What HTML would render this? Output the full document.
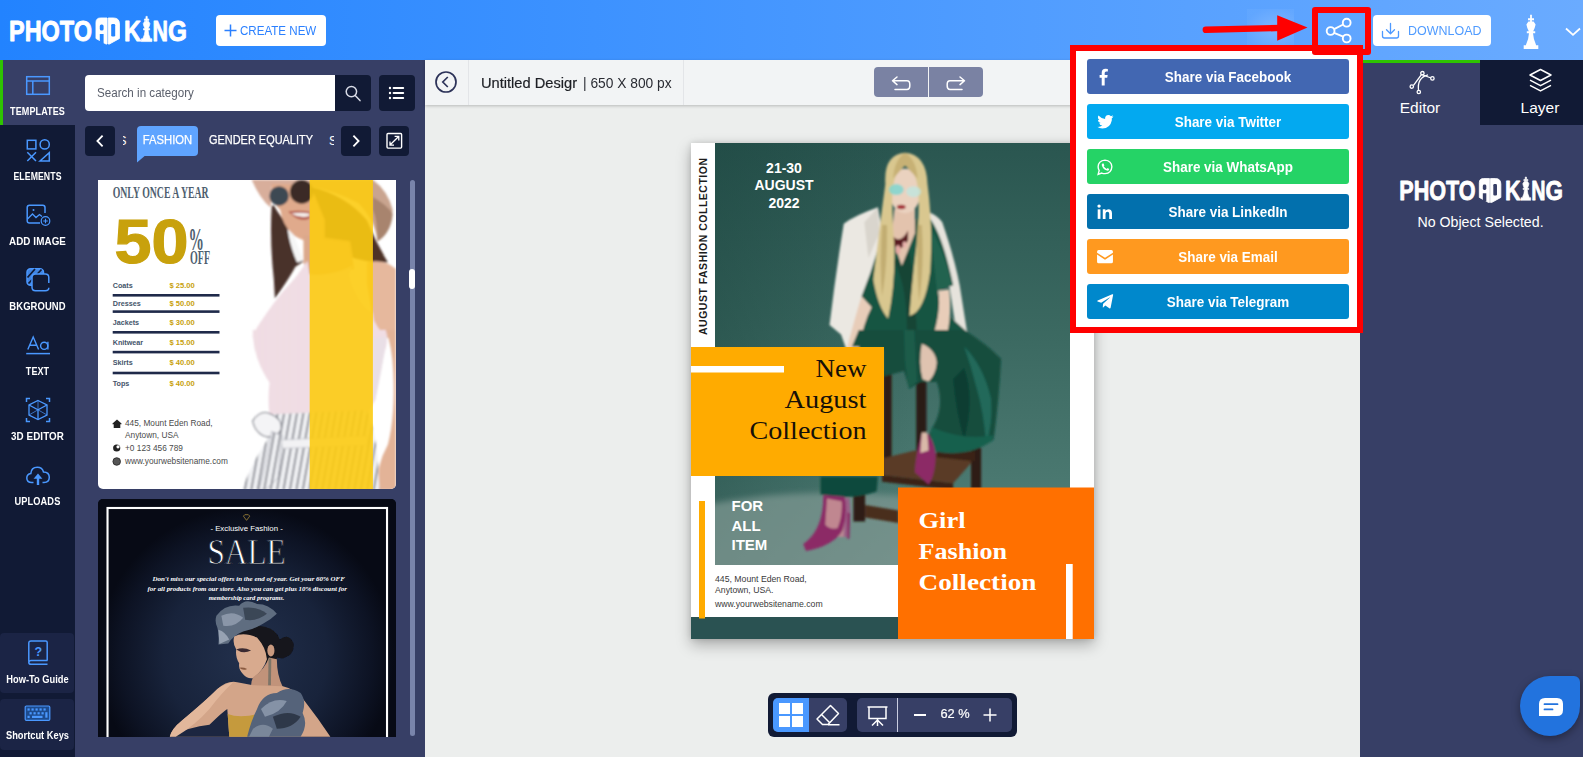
<!DOCTYPE html>
<html>
<head>
<meta charset="utf-8">
<title>PhotoADKing</title>
<style>
*{box-sizing:border-box;margin:0;padding:0}
html,body{width:1583px;height:757px;overflow:hidden;background:#eceeed;font-family:"Liberation Sans",sans-serif;}
.abs{position:absolute}
#header{position:absolute;left:0;top:0;width:1583px;height:60px;background:linear-gradient(90deg,#2283ff 0%,#6aabff 100%);}
#sidebar{position:absolute;left:0;top:60px;width:75px;height:697px;background:#111a35;}
#panel{position:absolute;left:75px;top:60px;width:350px;height:697px;background:#373f66;}
#center{position:absolute;left:425px;top:60px;width:935px;height:697px;background:#eceeed;}
#right{position:absolute;left:1360px;top:60px;width:223px;height:697px;background:#373f66;}
.sb-item{position:absolute;left:0;width:75px;height:65px;text-align:center;color:#fff;font-size:10.5px;font-weight:bold;letter-spacing:0.1px}
.sb-item .lbl{position:absolute;left:0;width:75px;text-align:center;}
.sb-item svg{position:absolute;}
</style>
</head>
<body>
<!-- HEADER -->
<div id="header">
<svg width="0" height="0" style="position:absolute">
<defs>
<symbol id="king" viewBox="-8 14 16 36" overflow="visible"><path d="M-0.9,14.7H0.9V18.2H3V20.2H0.9V21.4H2.6L4.6,24.6Q4,28 2.2,31.3H4.2V33.3H2Q2.5,40 5,44.8V45.2H7.3V49.1H-7.3V45.2H-5V44.8Q-2.5,40 -2,33.3H-4.2V31.3H-2.2Q-4,28 -4.6,24.6L-2.6,21.4H-0.9V20.2H-3V18.2H-0.9Z"/></symbol>
<symbol id="logo" viewBox="0 0 200 60" overflow="visible">
<g fill="#fff" stroke="#fff" stroke-width="0.9" stroke-linejoin="round" font-family="Liberation Sans, sans-serif" font-weight="bold" font-size="30">
<text x="9" y="41.4" textLength="83" lengthAdjust="spacingAndGlyphs">PHOTO</text>
<path d="M96,22.5Q96,18 100.5,18H107V44H106L96,38.5Z M108.2,18H113.5Q119.4,18 119.4,24V38.5L109.4,44H108.2Z"/>
<text x="124" y="41.4" textLength="17" lengthAdjust="spacingAndGlyphs">K</text>
<text x="152.4" y="41.4" textLength="15.5" lengthAdjust="spacingAndGlyphs">N</text>
<text x="168" y="41.4" textLength="19" lengthAdjust="spacingAndGlyphs">G</text>
<path transform="translate(146.6,5.6) scale(0.73,0.733)" d="M-0.9,14.7H0.9V18.2H3V20.2H0.9V21.4H2.6L4.6,24.6Q4,28 2.2,31.3H4.2V33.3H2Q2.5,40 5,44.8V45.2H7.3V49.1H-7.3V45.2H-5V44.8Q-2.5,40 -2,33.3H-4.2V31.3H-2.2Q-4,28 -4.6,24.6L-2.6,21.4H-0.9V20.2H-3V18.2H-0.9Z"/>
</g>
<g class="lg-cut" style="fill:var(--lc,#2585ff)">
<rect x="99.8" y="24.5" width="3.8" height="6" rx="1.6"/>
<rect x="99.8" y="34" width="3.8" height="9"/>
<rect x="111.2" y="24" width="4" height="12.5" rx="1.2"/>
</g>
</symbol>
</defs></svg>
<svg class="abs" style="left:0;top:0" width="200" height="60"><use href="#logo"/></svg>
<div class="abs" style="left:216px;top:15px;width:110px;height:31px;background:#fff;border-radius:4px;"></div>
<svg class="abs" style="left:224px;top:24px" width="13" height="13"><path d="M6.5,0.5V12.5M0.5,6.5H12.5" stroke="#2b80ff" stroke-width="1.5" fill="none"/></svg>
<div class="abs" style="left:240px;top:22.8px;font-size:13px;line-height:16px;color:#2b80ff;white-space:nowrap;transform-origin:left center;transform:scaleX(0.89)">CREATE NEW</div>
<!-- red arrow -->
<div class="abs" style="left:1247px;top:9px;width:47px;height:37px;background:radial-gradient(ellipse at 60% 55%,rgba(255,255,255,0.2),rgba(255,255,255,0.04) 75%)"></div>
<svg class="abs" style="left:1195px;top:5px" width="125" height="50"><path d="M10.8,24.8L86,22.9" stroke="#ff0000" stroke-width="6.4" stroke-linecap="round" fill="none"/><path d="M82.2,10.2L112.5,22.5L82.2,35.7Z" fill="#ff0000"/></svg>
<!-- share icon -->
<svg class="abs" style="left:1320px;top:12px" width="40" height="40"><g stroke="#fff" stroke-width="1.9" fill="none"><circle cx="26.7" cy="10.7" r="3.9"/><circle cx="10.6" cy="19" r="3.9"/><circle cx="26.7" cy="26.5" r="3.9"/><path d="M14.1,17.2L23.2,12.5M14.1,20.8L23.2,24.7"/></g></svg>
<!-- download -->
<div class="abs" style="left:1373px;top:15px;width:118px;height:31px;background:#fff;border-radius:4px;"></div>
<svg class="abs" style="left:1381px;top:21px" width="20" height="20"><g stroke="#4d99ff" stroke-width="1.3" fill="none" stroke-linecap="round" stroke-linejoin="round"><path d="M9.5,2.5V12.5M5.5,8.8L9.5,12.8L13.5,8.8"/><path d="M1.5,10.5V15Q1.5,17 3.5,17H15.5Q17.5,17 17.5,15V10.5"/></g></svg>
<div class="abs" style="left:1408px;top:22.8px;font-size:13px;line-height:16px;color:#4f9bff;white-space:nowrap;transform-origin:left center;transform:scaleX(0.96)">DOWNLOAD</div>
<svg class="abs" style="left:1523px;top:14px" width="16" height="36" fill="#fff"><use href="#king"/></svg>
<svg class="abs" style="left:1563px;top:25px" width="20" height="14"><path d="M3,3.5L10,9.8L17,3.5" stroke="#fff" stroke-width="1.8" fill="none"/></svg>
</div>
<!-- SIDEBAR -->
<div id="sidebar"><div class="sb-item" style="top:0px;background:#373f66;border-left:3px solid #2ec400;"><svg style="left:0;top:0" width="75" height="65" viewBox="3 0 75 65" fill="none" stroke="#4a98ff" stroke-width="1.5"><rect x="26.7" y="16.7" width="22.6" height="17.6"/><path d="M26.7,21H49.3M32.8,21V34.3"/></svg><div class="lbl" style="top:44.6px;left:-3px;line-height:13px;transform:scaleX(0.86)">TEMPLATES</div></div><div class="sb-item" style="top:65px;"><svg style="left:0;top:0" width="75" height="65" viewBox="0 0 75 65" fill="none" stroke="#4a98ff" stroke-width="1.5"><rect x="27.3" y="15.3" width="8.6" height="8.6"/><circle cx="44.7" cy="19.4" r="4.6"/><path d="M27.3,27.3L36,36M36,27.3L27.3,36"/><path d="M40,36H49.3V27.6Z"/></svg><div class="lbl" style="top:44.6px;line-height:13px;transform:scaleX(0.83)">ELEMENTS</div></div><div class="sb-item" style="top:130px;"><svg style="left:0;top:0" width="75" height="65" viewBox="0 0 75 65" fill="none" stroke="#4a98ff" stroke-width="1.5"><path d="M45,23V17.5Q45,15.2 42.7,15.2H29.5Q27.2,15.2 27.2,17.5V30.7Q27.2,33 29.5,33H40"/><path d="M27.5,29L32.5,24L36,27.5L39.5,24.5L42,26.5" stroke-width="1.3"/><circle cx="33.5" cy="20" r="1" fill="#4a98ff" stroke="none"/><circle cx="45.5" cy="31" r="4.3" stroke-width="1.2"/><path d="M45.5,28.7V33.3M43.2,31H47.8" stroke-width="1.1"/></svg><div class="lbl" style="top:44.6px;line-height:13px;transform:scaleX(0.935)">ADD IMAGE</div></div><div class="sb-item" style="top:195px;"><svg style="left:0;top:0" width="75" height="65" viewBox="0 0 75 65" fill="none" stroke="#4a98ff" stroke-width="1.5"><rect x="27" y="13.8" width="16.5" height="16.5" rx="3.5" fill="#4a98ff" fill-opacity="0.85"/><path d="M28.5,28.5L41.5,14.5M27.5,22.5L35,14M34,30.5L43.5,20" stroke="#111a35" stroke-width="1.7"/><rect x="32" y="19" width="16.8" height="16.8" rx="3.5" fill="#111a35" stroke="none"/><path d="M48.8,28V22.5Q48.8,19 45.3,19H35.5Q32,19 32,22.5V32.3Q32,35.8 35.5,35.8H45.3Q48.8,35.8 48.8,32.8" /></svg><div class="lbl" style="top:44.6px;line-height:13px;transform:scaleX(0.90)">BKGROUND</div></div><div class="sb-item" style="top:260px;"><svg style="left:0;top:0" width="75" height="65" viewBox="0 0 75 65" fill="none" stroke="#4a98ff" stroke-width="1.5"><path d="M27.8,29.5L33.2,17L38.6,29.5M29.8,25.3H36.6" stroke-width="1.4"/><circle cx="44.2" cy="25.8" r="3.6" stroke-width="1.4"/><path d="M47.9,21.8V29.6" stroke-width="1.4"/><path d="M26.2,33.6H50"/></svg><div class="lbl" style="top:44.6px;line-height:13px;transform:scaleX(0.86)">TEXT</div></div><div class="sb-item" style="top:325px;"><svg style="left:0;top:0" width="75" height="65" viewBox="0 0 75 65" fill="none" stroke="#4a98ff" stroke-width="1.5"><path d="M38,15.5L47,20V30L38,34.5L29,30V20Z" stroke-width="1.3"/><path d="M29,20L38,24.8L47,20M38,24.8V34.5" stroke-width="1.3"/><path d="M38,15.5V24.8M29,30L38,24.8L47,30" stroke-width="0.7"/><path d="M26.5,17V13.5H30M46,13.5H49.5V17M26.5,33V36.5H30M46,36.5H49.5V33" stroke-width="1.5"/></svg><div class="lbl" style="top:44.6px;line-height:13px;transform:scaleX(0.935)">3D EDITOR</div></div><div class="sb-item" style="top:390px;"><svg style="left:0;top:0" width="75" height="65" viewBox="0 0 75 65" fill="none" stroke="#4a98ff" stroke-width="1.5"><path d="M33.5,32.5H31.8Q26.8,32.5 26.8,28Q26.8,24.2 30.8,23.6Q31.2,17.3 37.3,17.3Q42.3,17.3 43.5,22Q49.3,22.2 49.3,27.3Q49.3,32.5 44,32.5H42.5"/><path d="M38,35V26" stroke-width="2.4"/><path d="M33.6,28.7L38,23.6L42.4,28.7Z" fill="#4a98ff" stroke="none"/></svg><div class="lbl" style="top:44.6px;line-height:13px;transform:scaleX(0.88)">UPLOADS</div></div><div class="abs" style="left:0;top:573px;width:74px;height:60px;background:#1b2445;border-radius:4px"></div>
<svg class="abs" style="left:26px;top:579px" width="24" height="28" viewBox="0 0 24 28" fill="none" stroke="#4a98ff" stroke-width="1.5"><path d="M21.2,21.5V3.5Q21.2,2 19.7,2H5Q2.8,2 2.8,4.2V22.5"/><path d="M21.5,21.6H5.2Q2.8,21.6 2.8,23.4Q2.8,25.2 5.2,25.2H21.5" /><text x="12.2" y="16.5" font-family="Liberation Sans, sans-serif" font-size="12.5" font-weight="bold" fill="#4a98ff" stroke="none" text-anchor="middle">?</text></svg>
<div class="abs" style="left:0;top:613px;width:75px;text-align:center;color:#fff;font-weight:bold;font-size:11px;line-height:13px;transform:scaleX(0.845)">How-To Guide</div>
<div class="abs" style="left:0;top:638.5px;width:74px;height:51px;background:#1b2445;border-radius:4px"></div>
<svg class="abs" style="left:24px;top:645px" width="27" height="17" viewBox="0 0 27 17"><rect x="1.2" y="1" width="24.6" height="14.4" rx="1.2" fill="#1d4b8e" stroke="#4a98ff" stroke-width="1.2"/><g fill="#4a98ff"><rect x="3.5" y="3.4" width="2.2" height="2.2"/><rect x="7.5" y="3.4" width="2.2" height="2.2"/><rect x="11.5" y="3.4" width="2.2" height="2.2"/><rect x="15.5" y="3.4" width="2.2" height="2.2"/><rect x="19.5" y="3.4" width="2.2" height="2.2"/><rect x="5.5" y="7.2" width="2.2" height="2.2"/><rect x="9.5" y="7.2" width="2.2" height="2.2"/><rect x="13.5" y="7.2" width="2.2" height="2.2"/><rect x="17.5" y="7.2" width="2.2" height="2.2"/><rect x="21.3" y="7.2" width="2.2" height="5.5"/><rect x="3.5" y="10.8" width="2.2" height="2.2"/><rect x="8" y="10.8" width="10.5" height="2.2"/></g></svg>
<div class="abs" style="left:0;top:669px;width:75px;text-align:center;color:#fff;font-weight:bold;font-size:11px;line-height:13px;transform:scaleX(0.845)">Shortcut Keys</div>
</div>
<!-- PANEL -->
<div id="panel">
<!-- coordinates inside panel: page x-75, y-60 -->
<div class="abs" style="left:10px;top:15px;width:250px;height:36px;background:#fff;border-radius:4px 0 0 4px;"></div>
<div class="abs" style="left:22px;top:25px;font-size:12.5px;line-height:16px;color:#5a5f6b;white-space:nowrap;transform-origin:left center;transform:scaleX(0.93)">Search in category</div>
<div class="abs" style="left:260px;top:15px;width:36px;height:36px;background:#111a35;border-radius:0 4px 4px 0;"></div>
<svg class="abs" style="left:268px;top:23px" width="20" height="20" fill="none" stroke="#d8dbe6" stroke-width="1.5"><circle cx="8.4" cy="8.6" r="5.2"/><path d="M12.2,12.6L17,17.6" stroke-linecap="round"/></svg>
<div class="abs" style="left:304px;top:15px;width:36px;height:36px;background:#111a35;border-radius:4px;"></div>
<svg class="abs" style="left:313px;top:25px" width="18" height="16" fill="#fff"><circle cx="2" cy="3" r="1.2"/><circle cx="2" cy="8" r="1.2"/><circle cx="2" cy="13" r="1.2"/><rect x="4.6" y="2" width="11.6" height="2" rx="1"/><rect x="4.6" y="7" width="11.6" height="2" rx="1"/><rect x="4.6" y="12" width="11.6" height="2" rx="1"/></svg>
<!-- category row -->
<div class="abs" style="left:10px;top:66px;width:30px;height:30px;background:#111a35;border-radius:4px;"></div>
<svg class="abs" style="left:10px;top:66px" width="30" height="30" fill="none" stroke="#fff" stroke-width="1.8"><path d="M17.6,9.7L12.4,15L17.6,20.3"/></svg>
<div class="abs" style="left:47.5px;top:66px;width:4.5px;height:30px;overflow:hidden"><div class="abs" style="right:0.5px;top:8px;font-size:12px;line-height:14px;color:#fff;">S</div></div>
<div class="abs" style="left:62px;top:66px;width:61px;height:30px;background:#5fa4ff;border-radius:4px;"></div>
<svg class="abs" style="left:62px;top:90px" width="12" height="13"><path d="M0,0V12.5L10,4Z" fill="#5fa4ff"/></svg>
<div class="abs" style="left:62px;top:73px;width:61px;text-align:center;font-size:12.5px;line-height:14px;color:#fff;transform:scaleX(0.9);-webkit-text-stroke:0.25px #fff">FASHION</div>
<div class="abs" style="left:134px;top:73px;font-size:12.5px;line-height:14px;color:#fff;white-space:nowrap;transform-origin:left center;transform:scaleX(0.875);-webkit-text-stroke:0.25px #fff">GENDER EQUALITY</div>
<div class="abs" style="left:254px;top:66px;width:5px;height:30px;overflow:hidden"><div class="abs" style="left:0px;top:8px;font-size:12px;line-height:14px;color:#fff;">S</div></div>
<div class="abs" style="left:266px;top:66px;width:30px;height:30px;background:#111a35;border-radius:4px;"></div>
<svg class="abs" style="left:266px;top:66px" width="30" height="30" fill="none" stroke="#fff" stroke-width="1.8"><path d="M12.4,9.7L17.6,15L12.4,20.3"/></svg>
<div class="abs" style="left:304px;top:66px;width:30px;height:30px;background:#111a35;border-radius:4px;"></div>
<svg class="abs" style="left:304px;top:66px" width="30" height="30" fill="none" stroke="#fff" stroke-width="1.4"><rect x="8" y="7.5" width="14.6" height="14.6" rx="1"/><path d="M11,19L19.6,10.5M15.6,10.3H19.8V14.5M11,15.4V19.2H15" stroke-width="1.3"/></svg>
<!-- scrollbar -->
<div class="abs" style="left:334.5px;top:120px;width:5px;height:556px;background:#7984ab;border-radius:2.5px"></div>
<div class="abs" style="left:333.5px;top:209px;width:6.5px;height:20px;background:#fff;border-radius:3px"></div>
<!-- THUMB1 -->
<div id="thumb1" class="abs" style="left:23px;top:120px;width:298px;height:309px;background:#fff;border-radius:0 0 5px 5px;overflow:hidden"><svg width="298" height="309" viewBox="0 0 298 309" style="position:absolute;left:0;top:0">
<defs><filter id="b1" x="-20%" y="-20%" width="140%" height="140%"><feGaussianBlur stdDeviation="1.2"/></filter>
<pattern id="stripes" width="30" height="10" patternUnits="userSpaceOnUse" patternTransform="rotate(10)"><rect width="30" height="10" fill="#eff0f3"/><rect x="0" width="7" height="10" fill="#6a6c76"/></pattern>
<pattern id="ribs" width="14" height="10" patternUnits="userSpaceOnUse"><rect width="14" height="10" fill="#f3e1e7"/><rect x="0" width="3" height="10" fill="#e6ced7"/></pattern>
</defs>
<g filter="url(#b1)">
<g transform="translate(142,-2) scale(0.2114)">
<!-- hat left brim -->
<path d="M55,8 L330,8 L330,40 L150,40 L145,140 Q95,100 55,8Z" fill="#d8ae9b"/>
<!-- hat right brim -->
<path d="M330,8 L628,8 Q700,60 722,150 Q720,250 650,300 Q640,200 560,120 Q450,60 330,40Z" fill="#c9a48f"/>
<path d="M628,90 Q700,130 722,170 Q715,260 650,300 Q650,200 628,150Z" fill="#a8846e"/>
<!-- hair left -->
<path d="M150,130 Q140,300 160,480 L165,570 Q230,480 262,420 L300,395 Q250,300 240,230 Q200,200 160,130Z" fill="#4a302a"/>
<!-- hair right behind -->
<path d="M330,40 Q500,80 600,200 Q640,300 700,400 L628,400 L540,380 L330,300Z" fill="#4d3027"/>
<!-- face -->
<path d="M150,30 L330,30 L400,200 L400,330 Q300,300 250,270 Q200,220 190,150 Q150,120 150,30Z" fill="#e0aa8c"/>
<!-- neck -->
<path d="M300,270 L520,300 L540,430 L330,470 L300,400Z" fill="#dba88b"/>
<!-- sunglasses -->
<circle cx="185" cy="85" r="46" fill="#3e4853"/>
<circle cx="292" cy="66" r="56" fill="#3a2a26"/>
<!-- smile -->
<path d="M228,158 Q280,150 330,160 L330,190 Q280,215 228,158Z" fill="#b5584a"/>
<path d="M240,168 Q285,160 328,168 L328,180 Q285,192 240,168Z" fill="#f4eeea"/>
<!-- earring -->
<path d="M225,240 L255,270 L300,390 L270,400 Q235,320 225,240Z" fill="#f6f6f6"/>
<!-- shoulder right skin -->
<path d="M600,400 Q680,380 738,430 L738,757 L690,757 Q640,700 628,660 L600,500Z" fill="#e6b89d"/>
<!-- pink top upper -->
<path d="M318,392 Q270,470 200,540 Q120,640 60,740 L60,757 L690,757 Q630,700 628,640 Q560,600 520,480 Q510,440 540,410 Q430,470 330,455Z" fill="url(#ribs)"/>
</g>
<g transform="translate(142,150) scale(0.2114)">
<!-- arm right -->
<path d="M690,0 L738,0 L738,757 L650,757 Q640,650 700,540 Q735,400 725,200 Q720,80 690,0Z" fill="#e3b397"/>
<!-- pink top lower -->
<path d="M60,0 L690,0 Q700,30 695,60 Q660,200 640,330 L600,400 L140,400 Q130,330 140,250 Q60,130 60,0Z" fill="url(#ribs)"/>
<path d="M628,40 L695,30 Q670,200 640,330 L628,330Z" fill="#e9dfe6"/>
<!-- pants -->
<path d="M130,400 L600,380 Q640,480 650,600 L660,757 L10,757 Q60,620 130,520Z" fill="url(#stripes)"/>
<!-- bow -->
<path d="M60,430 Q100,370 150,400 Q200,420 195,470 Q170,520 110,500 Q70,480 60,430Z" fill="#f4f4f6" stroke="#7a7c86" stroke-width="5"/>
<path d="M150,480 L200,500 L180,700 L120,757 L90,757 Q130,600 150,480Z" fill="url(#stripes)" stroke="#9a9ca6" stroke-width="3"/>
<!-- belt -->
<path d="M195,520 L600,500 L605,545 L200,560Z" fill="#f2f2f4" stroke="#b8bac2" stroke-width="3"/>
</g>
</g>
<!-- yellow strip -->
<rect x="211.7" y="0" width="63.2" height="309" fill="#fccb12" fill-opacity="0.9"/>
<g font-family="Liberation Serif, serif" font-weight="bold" fill="#4f5f70">
<text x="14.7" y="18.2" font-size="17" textLength="96" lengthAdjust="spacingAndGlyphs">ONLY ONCE A YEAR</text>
<text x="90.5" y="69.5" font-size="31" textLength="15.5" lengthAdjust="spacingAndGlyphs">%</text>
<text x="92" y="83.9" font-size="19" textLength="20" lengthAdjust="spacingAndGlyphs">OFF</text>
</g>
<text x="16.5" y="82.9" font-family="Liberation Sans, sans-serif" font-weight="bold" font-size="63" fill="#c8a10c" stroke="#c8a10c" stroke-width="1.2" textLength="74" lengthAdjust="spacingAndGlyphs">50</text>
<g font-family="Liberation Sans, sans-serif" font-weight="bold" font-size="7.2"><text x="14.7" y="107.6" fill="#44546a">Coats</text><text x="71.4" y="107.6" fill="#c8a10c" font-size="7.6">$ 25.00</text><text x="14.7" y="125.6" fill="#44546a">Dresses</text><text x="71.4" y="125.6" fill="#c8a10c" font-size="7.6">$ 50.00</text><text x="14.7" y="145.1" fill="#44546a">Jackets</text><text x="71.4" y="145.1" fill="#c8a10c" font-size="7.6">$ 30.00</text><text x="14.7" y="164.6" fill="#44546a">Knitwear</text><text x="71.4" y="164.6" fill="#c8a10c" font-size="7.6">$ 15.00</text><text x="14.7" y="184.6" fill="#44546a">Skirts</text><text x="71.4" y="184.6" fill="#c8a10c" font-size="7.6">$ 40.00</text><text x="14.7" y="206.3" fill="#44546a">Tops</text><text x="71.4" y="206.3" fill="#c8a10c" font-size="7.6">$ 40.00</text></g>
<rect x="14.7" y="114.0" width="106.8" height="2.6" fill="#1f2a4a"/><rect x="14.7" y="130.3" width="106.8" height="2.6" fill="#1f2a4a"/><rect x="14.7" y="151.0" width="106.8" height="2.6" fill="#1f2a4a"/><rect x="14.7" y="170.8" width="106.8" height="2.6" fill="#1f2a4a"/><rect x="14.7" y="191.7" width="106.8" height="2.6" fill="#1f2a4a"/>
<g font-family="Liberation Sans, sans-serif" font-size="8.3" fill="#4a4a4a">
<text x="27" y="246.3">445, Mount Eden Road,</text>
<text x="27" y="257.5">Anytown, USA</text>
<text x="27" y="270.5">+0 123 456 789</text>
<text x="27" y="284">www.yourwebsitename.com</text>
</g>
<path d="M14.5,243.5L19,239.5L23.5,243.5V244.3H22.3V248H15.7V244.3H14.5Z" fill="#222"/>
<circle cx="18.7" cy="268" r="3.6" fill="#222"/><circle cx="20" cy="266.8" r="1.6" fill="#fff"/>
<circle cx="18.7" cy="281.5" r="3.8" fill="#555" stroke="#222" stroke-width="0.8"/>
</svg></div>
<!-- THUMB2 -->
<div id="thumb2" class="abs" style="left:23px;top:439px;width:298px;height:238px;background:#0a0e1b;border-radius:5px 5px 0 0;overflow:hidden"><svg width="298" height="238" viewBox="0 0 298 238" style="position:absolute;left:0;top:0">
<defs><radialGradient id="g2" cx="470" cy="470" r="420" gradientUnits="userSpaceOnUse"><stop offset="0" stop-color="#22304c"/><stop offset="0.55" stop-color="#18233b"/><stop offset="0.85" stop-color="#0d1324"/><stop offset="1" stop-color="#070a15"/></radialGradient>
<filter id="b2f" x="-20%" y="-20%" width="140%" height="140%"><feGaussianBlur stdDeviation="3.5"/></filter></defs>
<g transform="translate(-18,-9) scale(0.3529)">
<rect x="40" y="20" width="870" height="740" fill="url(#g2)"/>
<g transform="scale(2.8337) translate(18,9)"><g transform="translate(52,91) scale(0.1982)" filter="url(#b2f)">
<!-- hair -->
<path d="M430,215 Q500,170 580,185 Q640,200 655,250 Q700,215 725,270 Q730,330 670,345 L640,340 Q630,380 600,400 L560,300 Q520,250 430,215Z" fill="#14141a"/>
<!-- headpiece -->
<path d="M335,130 Q380,70 450,80 Q480,40 540,70 Q600,70 640,120 Q610,150 570,170 Q520,200 470,210 Q420,230 395,270 L345,275 Q350,220 340,190 Q325,160 335,130Z" fill="#5f6d80"/>
<path d="M360,130 Q420,100 470,140 Q430,190 370,180Z" fill="#8a96a8"/>
<path d="M470,90 Q540,80 590,120 Q540,160 480,150Z" fill="#3b4656"/>
<path d="M345,200 Q380,210 400,250 L350,272Z" fill="#97a2b2"/>
<!-- face -->
<path d="M425,235 Q470,210 540,240 Q585,290 590,350 Q570,410 520,445 Q490,450 470,425 Q445,400 450,370 Q430,340 435,300 Q415,270 425,235Z" fill="#d8aa8e"/>
<path d="M435,300 Q470,285 510,305 Q470,325 435,300Z" fill="#3a2c30"/>
<path d="M450,392 Q470,388 490,398 Q470,410 450,392Z" fill="#8a5a40"/>
<!-- ear -->
<ellipse cx="610" cy="305" rx="18" ry="30" fill="#c99a7f"/>
<!-- neck -->
<path d="M520,440 Q580,400 600,340 L640,350 Q640,430 670,490 L520,520 Q500,480 520,440Z" fill="#c1937a"/>
<!-- body -->
<path d="M100,740 Q110,700 160,660 Q280,560 340,500 Q390,455 440,465 L520,480 L670,485 Q740,500 780,560 Q850,650 910,740 Z" fill="#d3a589"/>
<path d="M100,740 Q200,690 300,680 Q360,620 390,600 L400,740Z" fill="#1b2740"/>
<path d="M160,660 Q280,560 340,500 Q380,470 420,465 Q360,520 300,600 Q230,680 130,740 L100,740 Q110,700 160,660Z" fill="#e2b79b"/>
<!-- gold bodice -->
<path d="M392,625 Q450,650 545,625 L560,740 L400,740Z" fill="#c59a3c"/>
<!-- chest flower -->
<path d="M540,600 Q570,520 640,520 Q700,480 760,520 Q790,560 770,620 Q800,680 760,740 L490,740 Q510,660 540,600Z" fill="#55637a"/>
<path d="M560,600 Q620,540 690,560 Q660,620 580,640Z" fill="#8592a6"/>
<path d="M620,640 Q700,600 760,640 Q720,700 640,700Z" fill="#2f3949"/>
<path d="M520,700 Q570,660 620,700 L600,740 L500,740Z" fill="#7a879a"/>
<!-- earring -->
<path d="M598,345 L612,345 L610,480 L596,480Z" fill="#7d7468"/>
</g></g>
<rect x="78" y="51" width="792" height="720" fill="none" stroke="#fff" stroke-width="6"/>
<path d="M463,74L472,86L481,74L477,70H467Z" fill="none" stroke="#b8963c" stroke-width="2"/>
<g fill="#fff" text-anchor="middle">
<text x="472" y="116" font-family="Liberation Sans, sans-serif" font-size="22" textLength="205" lengthAdjust="spacingAndGlyphs">- Exclusive Fashion -</text>
<text x="472" y="210" font-family="Liberation Serif, serif" font-size="104" textLength="222" lengthAdjust="spacingAndGlyphs" stroke="#141c31" stroke-width="2.6">SALE</text>
<g font-family="Liberation Serif, serif" font-style="italic" font-weight="bold" font-size="20">
<text x="478" y="257" textLength="545" lengthAdjust="spacingAndGlyphs">Don't miss our special offers in the end of year. Get your 60% OFF</text>
<text x="474" y="285" textLength="565" lengthAdjust="spacingAndGlyphs">for all products from our store. Also you can get plus 10% discount for</text>
<text x="472" y="313" textLength="215" lengthAdjust="spacingAndGlyphs">membership card programs.</text>
</g></g>
</g>
</svg></div>
</div>
<!-- CENTER -->
<div id="center">
<!-- coords: page x-425, y-60 -->
<div class="abs" style="left:0;top:0;width:935px;height:45px;background:#f2f4f5;box-shadow:0 1px 3px rgba(0,0,0,0.22)"></div>
<svg class="abs" style="left:9px;top:10px" width="24" height="24" fill="none" stroke="#2c3258" stroke-width="1.7"><circle cx="12" cy="12" r="10"/><path d="M13.8,7L8.8,12L13.8,17"/></svg>
<div class="abs" style="left:43px;top:0;width:1px;height:45px;background:#e3e5e8"></div>
<div class="abs" style="left:56px;top:14px;font-size:14.5px;line-height:18px;color:#1d1f24;white-space:nowrap;transform-origin:left center;transform:scaleX(1.01);-webkit-text-stroke:0.2px #1d1f24">Untitled Desigr</div>
<div class="abs" style="left:158px;top:14px;font-size:14.5px;line-height:18px;color:#2a2c33;white-space:nowrap;transform-origin:left center;transform:scaleX(0.95)">| 650 X 800 px</div>
<div class="abs" style="left:258px;top:0;width:1px;height:45px;background:#e3e5e8"></div>
<div class="abs" style="left:449px;top:6.5px;width:108.5px;height:30.5px;background:#7a82a3;border-radius:4px"></div>
<div class="abs" style="left:503px;top:6.5px;width:1px;height:30.5px;background:#f2f4f5"></div>
<svg class="abs" style="left:449px;top:6.5px" width="109" height="31" fill="none" stroke="#fff" stroke-width="1.5" stroke-linecap="round" stroke-linejoin="round"><path d="M23,10L18.5,13.8L23,17.6M18.8,13.8H33Q35.8,13.8 35.8,17.3V19Q35.8,22.4 33,22.4H21"/><path d="M86,10L90.5,13.8L86,17.6M90.2,13.8H76Q73.2,13.8 73.2,17.3V19Q73.2,22.4 76,22.4H88"/></svg>
<!-- POSTER -->
<div id="poster" class="abs" style="left:266px;top:83px;width:403px;height:496px;background:#fff;box-shadow:0 6px 14px rgba(0,0,0,0.28), 0 0 6px rgba(0,0,0,0.12);overflow:hidden"><svg width="403" height="496" viewBox="0 0 403 496" style="position:absolute;left:0;top:0">
<defs>
<linearGradient id="pbg" x1="0" y1="0" x2="0" y2="1"><stop offset="0" stop-color="#2a5650"/><stop offset="0.45" stop-color="#3b6961"/><stop offset="0.8" stop-color="#4a7870"/><stop offset="1" stop-color="#5f837d"/></linearGradient>
<linearGradient id="pv" x1="0" y1="0" x2="1" y2="0"><stop offset="0" stop-color="#173f3a" stop-opacity="0.4"/><stop offset="0.55" stop-color="#173f3a" stop-opacity="0"/></linearGradient>
<filter id="pb" x="-10%" y="-10%" width="120%" height="120%"><feGaussianBlur stdDeviation="1.1"/></filter>
<filter id="pb2" x="-10%" y="-10%" width="120%" height="120%"><feGaussianBlur stdDeviation="3"/></filter>
<clipPath id="pclip"><rect x="24" y="0" width="355" height="422"/></clipPath>
</defs>
<g clip-path="url(#pclip)">
<rect x="24" y="0" width="355" height="422" fill="url(#pbg)"/>
<rect x="24" y="0" width="355" height="422" fill="url(#pv)"/>
<!-- floor light area -->
<ellipse cx="140" cy="405" rx="200" ry="55" fill="#7d9791" opacity="0.75" filter="url(#pb2)"/>
<g filter="url(#pb)">
<!-- TOP GROUP (zoom1 coords) -->
<g transform="translate(109,0) scale(0.2736)">
<!-- jacket left -->
<path d="M285,235 Q200,265 160,295 Q130,480 108,665 L150,700 L170,757 L215,757 L235,580 Q275,450 300,320Z" fill="#ebe8e2"/>
<path d="M285,235 L235,290 L250,420 L290,330Z" fill="#d9d5cd"/>
<!-- jacket right -->
<path d="M465,250 Q505,265 520,290 Q575,450 590,560 L612,700 L570,680 L545,520 L500,350Z" fill="#e6e3dc"/>
<!-- dress torso -->
<path d="M300,330 Q330,300 380,290 L470,270 Q520,330 560,520 L500,540 L520,610 L610,690 L700,757 L190,757 L240,640 L225,560 Q270,450 300,330Z" fill="#175443"/>
<path d="M340,430 Q400,520 390,757 L430,757 Q420,520 400,400Z" fill="#124536"/>
<path d="M470,300 Q530,400 555,520 L500,540 Q490,420 470,300Z" fill="#226350"/>
<!-- arms -->
<path d="M225,560 Q200,640 170,757 L215,757 Q230,660 262,600Z" fill="#e8cdb9"/>
<path d="M505,540 Q520,620 470,757 L520,757 Q560,650 545,535Z" fill="#e8cdb9"/>
<!-- neck + chest skin -->
<path d="M345,240 L420,240 L420,330 L372,450 L335,340Z" fill="#e3c3ad"/>
<!-- necklace -->
<path d="M335,335 Q365,375 395,320 L395,355 Q365,410 335,365Z" fill="#5a1f22"/>
<ellipse cx="358" cy="390" rx="9" ry="16" fill="#e5a9a3"/><ellipse cx="382" cy="372" rx="7" ry="12" fill="#e9b3ad"/>
<!-- face -->
<ellipse cx="384" cy="175" rx="58" ry="82" fill="#ead2bf"/>
<!-- hair -->
<path d="M384,36 Q305,42 312,150 Q285,350 268,500 Q285,600 322,642 Q348,520 345,380 Q335,250 338,175 Q345,100 384,82 Q425,100 432,175 Q438,250 425,380 Q408,520 400,632 Q455,620 476,470 Q486,300 466,150 Q462,42 384,36Z" fill="#d9c78f"/>
<path d="M384,36 Q345,60 340,130 L384,82 L430,130 Q425,60 384,36Z" fill="#c7b174"/>
<path d="M300,300 Q290,450 300,560 Q320,450 318,300Z" fill="#c2ad72"/>
<path d="M445,300 Q455,450 435,580 Q425,450 430,300Z" fill="#c2ad72"/>
<!-- glasses -->
<ellipse cx="352" cy="170" rx="27" ry="20" fill="#7fd6d0" opacity="0.85"/><ellipse cx="415" cy="178" rx="27" ry="20" fill="#bfe6e0" opacity="0.8"/>
<!-- lips -->
<ellipse cx="370" cy="234" rx="16" ry="8" fill="#a52c35"/>
</g>
<!-- BOTTOM GROUP (zoom2 coords) -->
<g transform="translate(109,187) scale(0.2736)">
<!-- stool -->
<path d="M305,150 L335,150 L335,520 L305,520Z" fill="#2e1e14"/>
<path d="M425,180 L462,180 L462,470 L425,470Z" fill="#2a1a12"/>
<path d="M300,470 L420,440 L640,470 L560,560 L300,530Z" fill="#5a3b25"/>
<path d="M300,530 L560,560 L560,585 L300,555Z" fill="#3a2416"/>
<path d="M625,430 L662,430 L662,580 L625,580Z" fill="#2e1e14"/>
<path d="M195,600 L238,600 L238,700 L195,700Z" fill="#2e1e14"/>
<path d="M238,640 L360,660 L360,705 L238,685Z" fill="#4a2f1d"/>
<path d="M500,430 L640,445 L640,480 L500,465Z" fill="#3a2416"/>
<!-- pants main -->
<path d="M215,0 L600,0 Q680,50 735,105 Q728,250 708,400 Q600,475 475,438 Q458,400 485,355 Q530,280 500,190 L440,190 L400,215 L380,150 L305,170 L305,60 L190,60 Z" fill="#134d3e"/>
<path d="M600,60 Q670,130 698,250 Q705,350 680,415 Q672,300 645,210 Q625,130 600,60Z" fill="#21695a"/>
<path d="M600,140 Q640,250 600,400 Q570,300 560,180Z" fill="#093d31"/>
<path d="M480,355 Q600,405 706,385 L704,405 Q600,475 475,438Z" fill="#17614e"/>
<!-- left leg hem below yellow -->
<path d="M75,535 L285,535 L280,590 Q180,625 75,600Z" fill="#0f4a3c"/>
<!-- sash -->
<path d="M380,0 L418,0 L428,190 L397,213 L384,120Z" fill="#1a5c4a"/>
<!-- hand -->
<path d="M445,50 Q495,70 500,120 Q495,165 470,188 L448,180 Q432,120 445,50Z" fill="#dfc3b0"/>
<!-- heels right -->
<path d="M445,380 L470,380 Q500,430 495,480 Q490,540 470,565 L420,520 Q420,470 445,380Z" fill="#8c2b66"/>
<path d="M445,375 L465,375 L470,440 L440,450Z" fill="#d9b9a8"/>
<!-- heels left -->
<path d="M85,610 L180,615 Q190,680 175,757 L60,757 Q90,690 85,610Z" fill="#9a5f86"/>
<path d="M95,640 L165,650 L160,757 L80,757Z" fill="#d2aa9f" opacity="0.55"/>
</g>
<!-- lower-left foot (zoom3 coords: scale 2.857 origin 680,390 -> poster -11,247) -->
<g transform="translate(-11,247) scale(0.35)">
<path d="M410,300 L470,305 Q480,350 465,400 Q440,445 360,460 L352,440 Q410,400 410,300Z" fill="#8c2b66"/>
<path d="M420,310 L462,318 Q465,360 450,395 Q430,400 415,385Z" fill="#d6afa3" opacity="0.7"/>
<path d="M478,350 L486,352 L484,425 L478,425Z" fill="#8c2b66"/>
</g>
</g>
</g>
<!-- yellow box -->
<rect x="0" y="204" width="193" height="129" fill="#ffab00"/>
<rect x="0" y="223" width="93" height="6.5" fill="#fff"/>
<!-- orange box -->
<rect x="207" y="344.5" width="196" height="152" fill="#ff7000"/>
<rect x="375" y="421" width="6.7" height="75" fill="#fff"/>
<!-- bottom band -->
<rect x="0" y="474" width="207" height="22" fill="#2a5252"/>
<!-- yellow bar -->
<rect x="8" y="358" width="6" height="117.5" fill="#ffab00"/>
<!-- texts -->
<text transform="translate(15.8,192) rotate(-90)" font-family="Liberation Sans, sans-serif" font-weight="bold" font-size="10.5" fill="#1c1c1c" textLength="177" lengthAdjust="spacing">AUGUST FASHION COLLECTION</text>
<g font-family="Liberation Sans, sans-serif" font-weight="bold" font-size="14" fill="#fff" text-anchor="middle">
<text x="93" y="30">21-30</text><text x="93" y="47.3">AUGUST</text><text x="93" y="65">2022</text>
</g>
<g font-family="Liberation Serif, serif" font-size="25" fill="#161008" text-anchor="end">
<text x="175.5" y="233.5" textLength="51" lengthAdjust="spacingAndGlyphs">New</text>
<text x="175.5" y="264.5" textLength="82" lengthAdjust="spacingAndGlyphs">August</text>
<text x="175.5" y="295.5" textLength="117" lengthAdjust="spacingAndGlyphs">Collection</text>
</g>
<g font-family="Liberation Serif, serif" font-weight="bold" font-size="24" fill="#fff">
<text x="227.5" y="385" textLength="47" lengthAdjust="spacingAndGlyphs">Girl</text>
<text x="227.5" y="416" textLength="88.5" lengthAdjust="spacingAndGlyphs">Fashion</text>
<text x="227.5" y="447" textLength="118" lengthAdjust="spacingAndGlyphs">Collection</text>
</g>
<g font-family="Liberation Sans, sans-serif" font-weight="bold" font-size="15" fill="#fff">
<text x="40.5" y="368">FOR</text><text x="40.5" y="387.5">ALL</text><text x="40.5" y="407">ITEM</text>
</g>
<g font-family="Liberation Sans, sans-serif" font-size="8.7" fill="#3a3a3a">
<text x="24" y="439">445, Mount Eden Road,</text><text x="24" y="450.3">Anytown, USA.</text><text x="24" y="464">www.yourwebsitename.com</text>
</g>
</svg></div>
<!-- bottom toolbar -->
<div class="abs" style="left:343px;top:633px;width:249px;height:44px;background:#111a35;border-radius:6px"></div>
<div class="abs" style="left:348px;top:638px;width:74px;height:34px;background:#373f66;border-radius:5px"></div>
<div class="abs" style="left:348px;top:638px;width:36px;height:34px;background:#4a98ff;border-radius:5px 0 0 5px"></div>
<svg class="abs" style="left:348px;top:638px" width="36" height="34" fill="#fff"><rect x="6" y="5" width="11" height="11"/><rect x="19" y="5" width="11" height="11"/><rect x="6" y="18" width="11" height="11"/><rect x="19" y="18" width="11" height="11"/></svg>
<svg class="abs" style="left:386px;top:638px" width="36" height="34" fill="none" stroke="#fff" stroke-width="1.5" stroke-linejoin="round"><path d="M19.5,7.5L27.5,15.5L17,26.5H11.5L6,21Z"/><path d="M10.5,16.5L18.5,24.5M17,26.8H28.5"/></svg>
<div class="abs" style="left:432px;top:638px;width:155px;height:34px;background:#373f66;border-radius:5px"></div>
<div class="abs" style="left:472px;top:638px;width:1px;height:34px;background:#c9cde0"></div>
<svg class="abs" style="left:440px;top:643px" width="26" height="26" fill="none" stroke="#fff" stroke-width="1.5"><path d="M2.5,4H22.5M4,4V15.5H21V4M12.5,15.5V23M12.5,17L7,22.5M12.5,17L18,22.5"/></svg>
<div class="abs" style="left:489px;top:654px;width:12px;height:2px;background:#fff"></div>
<div class="abs" style="left:510px;top:646px;width:40px;text-align:center;font-size:13.5px;line-height:16px;color:#fff;-webkit-text-stroke:0.2px #fff;transform:scaleX(0.95)">62 %</div>
<svg class="abs" style="left:558px;top:648px" width="14" height="14" stroke="#fff" stroke-width="1.5"><path d="M7,0.5V13.5M0.5,7H13.5"/></svg>
</div>
<!-- RIGHT -->
<div id="right">
<!-- coords: page x-1360, y-60 -->
<div class="abs" style="left:0;top:0;width:120px;height:3px;background:#2ec400"></div>
<div class="abs" style="left:120px;top:0;width:103px;height:65px;background:#111a35"></div>
<svg class="abs" style="left:45px;top:6px" width="32" height="30" fill="none" stroke="#fff" stroke-width="1.3"><path d="M13.5,24.5Q12,11.5 23,8.8"/><path d="M8.5,19.3L16.5,8.5L26,12"/><circle cx="13.8" cy="26" r="1.7"/><circle cx="6.8" cy="20.6" r="1.7"/><circle cx="17.4" cy="7.2" r="1.7"/><circle cx="27.4" cy="12.4" r="1.7"/></svg>
<div class="abs" style="left:0;top:39px;width:120px;text-align:center;font-size:15.5px;line-height:18px;color:#fff;">Editor</div>
<svg class="abs" style="left:167px;top:8px" width="28" height="26" fill="none" stroke="#fff" stroke-width="1.5" stroke-linejoin="round"><path d="M13.5,1.5L24,7L13.5,12.5L3,7Z"/><path d="M3,12.2L13.5,17.7L24,12.2M3,17.4L13.5,22.9L24,17.4"/></svg>
<div class="abs" style="left:120px;top:39px;width:120px;text-align:center;font-size:15.5px;line-height:18px;color:#fff;">Layer</div>
<svg class="abs" style="left:30.5px;top:101.5px;--lc:#373f66" width="184" height="55.2" viewBox="0 0 200 60"><use href="#logo" style="--lc:#373f66"/></svg>
<div class="abs" style="left:0;top:153px;width:241px;text-align:center;font-size:14.2px;line-height:18px;color:#fff;">No Object Selected.</div>
<!-- chat bubble -->
<div class="abs" style="left:160px;top:616px;width:60px;height:60px;background:#2273de;border-radius:30px 6px 30px 30px;box-shadow:0 3px 8px rgba(0,0,0,0.35)"></div>
<svg class="abs" style="left:178px;top:637px" width="26" height="20"><path d="M1,7Q1,1 7,1H19Q25,1 25,7V13Q25,19 19,19H1Z" fill="#fff"/><path d="M6.5,7.2H19.5M6.5,12.4H14.5" stroke="#2273de" stroke-width="1.8" stroke-linecap="round"/></svg>
</div>
<!-- OVERLAYS -->
<div id="overlays">
<div class="abs" style="left:1069.5px;top:44.5px;width:293.5px;height:288px;background:#fff;border:6.5px solid #ff0000;"></div>
<div class="abs" style="left:1087px;top:59.0px;width:262px;height:34.5px;background:#4267b2;border-radius:3px"></div><svg class="abs" style="left:1095.5px;top:67.5px" width="18" height="18" viewBox="0 0 17 17"><path d="M11.2,3.2H9.6Q8.2,3.2 8.2,4.8V6.6H11L10.6,9.2H8.2V16.5H5.4V9.2H3.4V6.6H5.4V4.4Q5.4,0.8 9,0.8Q10.2,0.8 11.2,1Z" fill="#fff"/></svg><div class="abs" style="left:1107px;top:68.8px;width:242px;text-align:center;font-size:14px;line-height:17px;font-weight:bold;color:#fff;white-space:nowrap;transform:scaleX(0.96)">Share via Facebook</div>
<div class="abs" style="left:1087px;top:104.0px;width:262px;height:34.5px;background:#03a9f0;border-radius:3px"></div><svg class="abs" style="left:1095.5px;top:112.5px" width="18" height="18" viewBox="0 0 17 17"><path d="M16.5,3.4Q15.8,3.8 14.8,3.9Q15.8,3.2 16.1,2.2Q15.2,2.8 14.1,3Q13.1,1.9 11.7,1.9Q9,2 8.6,4.6L8.6,5.6Q5,5.4 2.3,2.4Q1,5 3.2,6.7Q2.5,6.7 1.8,6.3Q1.8,8.8 4.4,9.5Q3.7,9.7 3,9.6Q3.7,11.6 6,11.8Q3.8,13.4 1,13.1Q3.3,14.6 6,14.6Q13.4,14.4 14.9,7Q15,5.6 14.9,5Q15.9,4.3 16.5,3.4Z" fill="#fff"/></svg><div class="abs" style="left:1107px;top:113.8px;width:242px;text-align:center;font-size:14px;line-height:17px;font-weight:bold;color:#fff;white-space:nowrap;transform:scaleX(0.96)">Share via Twitter</div>
<div class="abs" style="left:1087px;top:149.0px;width:262px;height:34.5px;background:#25d366;border-radius:3px"></div><svg class="abs" style="left:1095.5px;top:157.5px" width="18" height="18" viewBox="0 0 17 17"><g fill="none" stroke="#fff" stroke-width="1.3"><path d="M2,15.5L3,11.8Q2,10 2,8.3Q2.2,2.6 8.5,2Q14.6,2.6 15,8.3Q14.6,14.4 8.5,14.8Q6.8,14.8 5.4,14.2Z"/></g><path d="M6.2,5.2L7.2,5.2L7.9,7L7.3,7.8Q8.3,9.6 10.2,10.3L10.9,9.5L12.5,10.3Q12.4,11.8 11,12Q6.6,11.6 5.4,6.7Q5.5,5.6 6.2,5.2Z" fill="#fff"/></svg><div class="abs" style="left:1107px;top:158.8px;width:242px;text-align:center;font-size:14px;line-height:17px;font-weight:bold;color:#fff;white-space:nowrap;transform:scaleX(0.96)">Share via WhatsApp</div>
<div class="abs" style="left:1087px;top:194.0px;width:262px;height:34.5px;background:#0270ad;border-radius:3px"></div><svg class="abs" style="left:1095.5px;top:202.5px" width="18" height="18" viewBox="0 0 17 17"><g fill="#fff"><rect x="1.6" y="6" width="2.6" height="9"/><circle cx="2.9" cy="2.9" r="1.6"/><path d="M6.4,6H8.9V7.3Q9.8,5.8 11.8,5.8Q15,5.9 15.1,9.6V15H12.5V10.2Q12.4,8.2 10.9,8.2Q9.1,8.2 9,10.2V15H6.4Z"/></g></svg><div class="abs" style="left:1107px;top:203.8px;width:242px;text-align:center;font-size:14px;line-height:17px;font-weight:bold;color:#fff;white-space:nowrap;transform:scaleX(0.96)">Share via LinkedIn</div>
<div class="abs" style="left:1087px;top:239.0px;width:262px;height:34.5px;background:#ff991f;border-radius:3px"></div><svg class="abs" style="left:1095.5px;top:247.5px" width="18" height="18" viewBox="0 0 17 17"><g fill="#fff"><path d="M1,3.5Q1,2 2.5,2H14.5Q16,2 16,3.5V4.5L8.5,9.3L1,4.5Z"/><path d="M1,6.2L8.5,11L16,6.2V13Q16,14.5 14.5,14.5H2.5Q1,14.5 1,13Z"/></g></svg><div class="abs" style="left:1107px;top:248.8px;width:242px;text-align:center;font-size:14px;line-height:17px;font-weight:bold;color:#fff;white-space:nowrap;transform:scaleX(0.96)">Share via Email</div>
<div class="abs" style="left:1087px;top:284.0px;width:262px;height:34.5px;background:#0088cc;border-radius:3px"></div><svg class="abs" style="left:1095.5px;top:292.5px" width="18" height="18" viewBox="0 0 17 17"><path d="M16.2,1.6L13.8,14Q13.5,15 12.6,14.5L8.8,11.7L7,13.5Q6.6,13.9 6.4,13.4L6.7,10.1L13,4.4Q13.3,4 12.7,4.2L4.9,9.1L1.5,8Q0.6,7.6 1.6,7.1L15.3,1.2Q16.3,0.9 16.2,1.6Z" fill="#fff"/></svg><div class="abs" style="left:1107px;top:293.8px;width:242px;text-align:center;font-size:14px;line-height:17px;font-weight:bold;color:#fff;white-space:nowrap;transform:scaleX(0.96)">Share via Telegram</div>
<div class="abs" style="left:1312px;top:7.3px;width:59px;height:47.3px;border:6px solid #ff0000;border-radius:3px"></div>
</div>
</body>
</html>
